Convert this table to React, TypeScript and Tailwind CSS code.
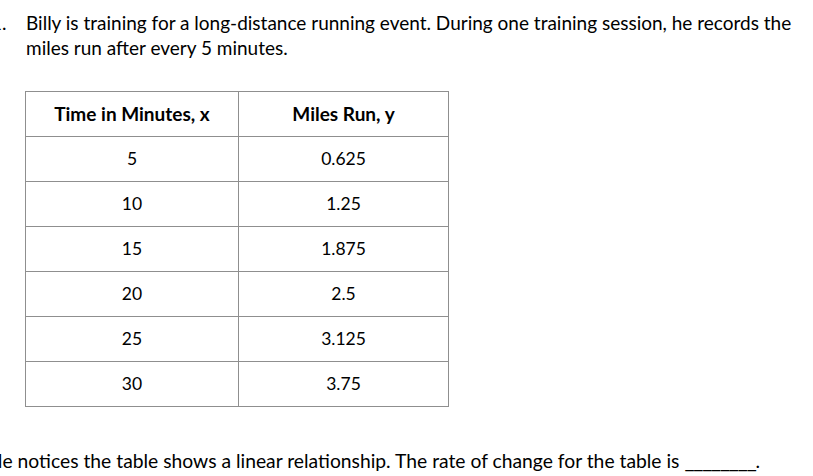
const rows: [string, string][] = [
  ['5', '0.625'],
  ['10', '1.25'],
  ['15', '1.875'],
  ['20', '2.5'],
  ['25', '3.125'],
  ['30', '3.75'],
];

export default function App() {
  return (
    <div
      className="relative h-[476px] w-[813px] overflow-hidden bg-white text-black"
      style={{ fontFamily: 'Lato, "Noto Sans", sans-serif' }}
    >
      {/* question text */}
      <div className="flex pt-[10px] text-[19px] leading-[25px]">
        <span className="ml-[-9px] w-[35px] shrink-0">1.</span>
        <p className="whitespace-nowrap">
          Billy is training for a long-distance running event. During one training session, he records the
          <br />
          miles run after every 5 minutes.
        </p>
      </div>

      {/* table */}
      <table className="ml-[25px] mt-[31px] w-[424px] table-fixed border-collapse text-center text-[17.5px]">
        <thead>
          <tr className="h-[45px]">
            <th className="w-[213px] border border-[#8f8f8f] text-[19px] font-bold">Time in Minutes, x</th>
            <th className="border border-[#8f8f8f] text-[19px] font-bold">Miles Run, y</th>
          </tr>
        </thead>
        <tbody>
          {rows.map(([x, y]) => (
            <tr key={x} className="h-[45px]">
              <td className="border border-[#8f8f8f]">{x}</td>
              <td className="border border-[#8f8f8f]">{y}</td>
            </tr>
          ))}
        </tbody>
      </table>

      {/* bottom sentence */}
      <p className="ml-[-12px] mt-[40px] whitespace-nowrap text-[19.3px] leading-[25px]">
        He notices the table shows a linear relationship. The rate of change for the table is{' '}
        <span className="text-[22px] leading-[25px] tracking-[-1.2px]">________</span>.
      </p>
    </div>
  );
}
